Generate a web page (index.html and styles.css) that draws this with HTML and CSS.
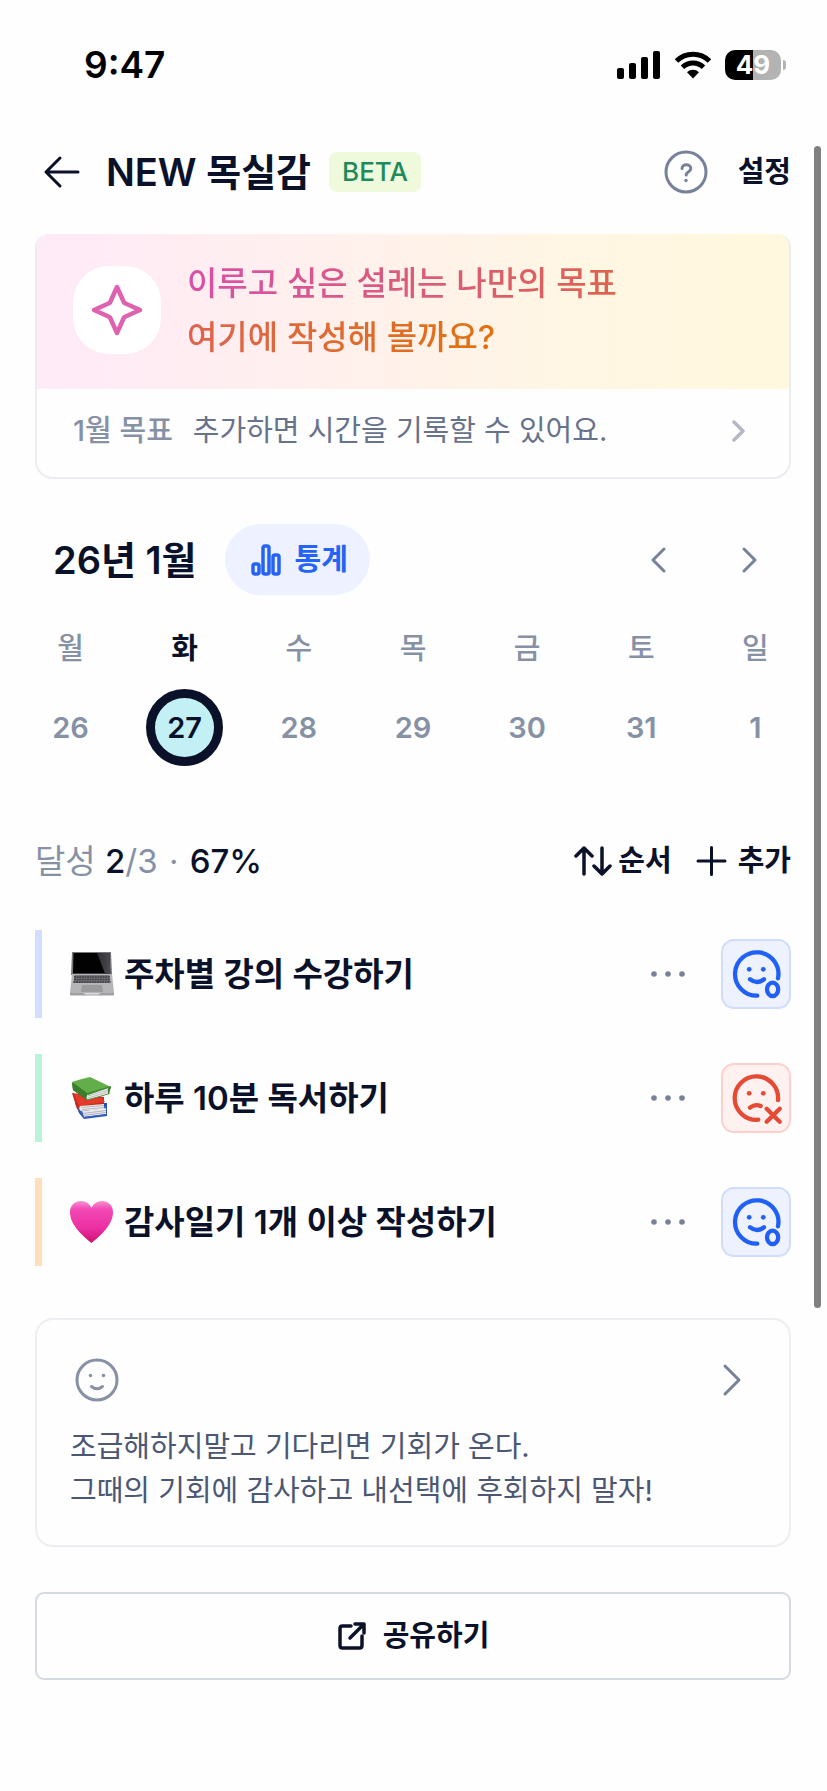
FILE: index.html
```html
<!DOCTYPE html>
<html lang="ko">
<head>
<meta charset="utf-8">
<meta name="viewport" content="width=device-width, initial-scale=1">
<title>NEW 목실감</title>
<link rel="stylesheet" href="styles.css">
</head>
<body>
<div class="screen">
  <div class="status-bar">
    <span class="status-time">9:47</span>
    <div class="status-icons">
      <svg width="44" height="30" viewBox="0 0 44 30" aria-hidden="true"><rect x="0" y="18" width="7" height="11" rx="2"/><rect x="12" y="13" width="7" height="16" rx="2"/><rect x="24" y="7" width="7" height="22" rx="2"/><rect x="36" y="1" width="7" height="28" rx="2"/></svg>
      <svg width="38" height="30" viewBox="0 0 38 30" aria-hidden="true"><g fill="none" stroke="#000" stroke-width="5"><path d="M2.500 11A23.500 23.500 0 0 1 35.500 11"/><path d="M8.500 17.200A15 15 0 0 1 29.500 17.200"/></g><path d="M13 22.200a8.600 8.600 0 0 1 12 0l-6 6.300z"/></svg>
      <div class="battery"><span class="battery-level">49</span></div>
    </div>
  </div>

  <header class="header">
    <button class="icon-button" type="button" aria-label="뒤로"><svg class="stroke" width="38" height="34" viewBox="0 0 38 34" stroke="#0a1128" stroke-width="3"><path d="M3 17h32M17 3L3 17l14 14"/></svg></button>
    <h1 class="title">NEW 목실감</h1>
    <span class="beta">BETA</span>
    <button class="icon-button help" type="button" aria-label="도움말"><svg class="stroke" width="44" height="44" viewBox="0 0 44 44" stroke="#77829a" stroke-width="3"><circle cx="22" cy="22" r="20"/><path d="M18 18.500c0-5 8.800-5 8.800 0 0 3.300-4.600 3.200-4.600 6.500"/><circle cx="22" cy="30.500" r="1.700" fill="#77829a" stroke="none"/></svg></button>
    <button class="text-button" type="button">설정</button>
  </header>

  <main class="content">
    <a class="goal-card" href="#goal">
      <div class="goal-banner">
        <span class="goal-tile"><svg class="stroke" width="52" height="52" viewBox="0 0 52 52" stroke="#df62b0" stroke-width="4.500"><path d="M26 3l7 15.500Q33.500 19 34 19.300L49 26l-15 6.700-1 .8L26 49l-7-15.500-1-.8L3 26l15-6.700 1-.8z"/></svg></span>
        <p class="goal-text"><span class="goal-gradient">이루고 싶은 설레는 나만의 목표<br>여기에 작성해 볼까요?</span></p>
      </div>
      <div class="goal-row">
        <span class="goal-label">1월 목표</span>
        <span class="goal-hint">추가하면 시간을 기록할 수 있어요.</span>
        <svg class="stroke" width="14" height="24" viewBox="0 0 14 24" stroke="#b3b8c6" stroke-width="3.500"><path d="M2 3l9 9-9 9"/></svg>
      </div>
    </a>

    <section>
      <div class="month-bar">
        <h2 class="month">26년 1월</h2>
        <button class="stats" type="button"><svg class="stroke" width="30" height="32" viewBox="0 0 30 32" stroke="#2563f6" stroke-width="3.500"><rect x="2" y="20" width="6" height="10" rx="2"/><rect x="12" y="2" width="6" height="28" rx="2"/><rect x="22" y="11" width="6" height="19" rx="2"/></svg>통계</button>
        <div class="month-nav">
          <button class="icon-button" type="button" aria-label="이전 주"><svg class="stroke" width="18" height="28" viewBox="0 0 18 28" stroke="#77829a" stroke-width="3"><path d="M15 3L4 14l11 11"/></svg></button>
          <button class="icon-button" type="button" aria-label="다음 주"><svg class="stroke" width="18" height="28" viewBox="0 0 18 28" stroke="#77829a" stroke-width="3"><path d="M3 3l11 11L3 25"/></svg></button>
        </div>
      </div>
      <div class="week">
        <button class="day" type="button"><span>월</span><span class="date">26</span></button>
        <button class="day selected" type="button"><span>화</span><span class="date">27</span></button>
        <button class="day" type="button"><span>수</span><span class="date">28</span></button>
        <button class="day" type="button"><span>목</span><span class="date">29</span></button>
        <button class="day" type="button"><span>금</span><span class="date">30</span></button>
        <button class="day" type="button"><span>토</span><span class="date">31</span></button>
        <button class="day" type="button"><span>일</span><span class="date">1</span></button>
      </div>
    </section>

    <section>
      <div class="summary">
        <p class="progress">달성 <b>2</b>/3 <i>·</i> <b>67%</b></p>
        <button class="text-button sort" type="button"><svg class="stroke" width="38" height="32" viewBox="0 0 38 32" stroke="#0a1128" stroke-width="3.500"><path d="M10 29V3M2 11l8-8 8 8M28 3v26M20 21l8 8 8-8"/></svg>순서</button>
        <button class="text-button add" type="button"><svg class="stroke" width="32" height="32" viewBox="0 0 32 32" stroke="#0a1128" stroke-width="3"><path d="M2 16h27M15.500 2.500v27"/></svg>추가</button>
      </div>

      <ul class="tasks">
        <li class="task blue">
          <svg width="44" height="44" viewBox="0 0 44 44" aria-hidden="true">
            <defs><linearGradient id="glare" x2="1"><stop offset="0" stop-color="#2c2c30"/><stop offset="1" stop-color="#4b4b50"/></linearGradient></defs>
            <path d="M2 0h39l1 23H1z" fill="#77777b"/><path d="M3.500 1h36l.8 20.500H3z" fill="#020203"/><path d="M27 1h12.500l.8 20.500H35z" fill="url(#glare)"/>
            <path d="M2 22h40l2 19H0z" fill="#b5b5b7"/><path d="M4.500 23h35l1 8H3.500z" fill="#77777b"/>
            <path d="M4 25h36M4 27.500h36M3.500 30h37" stroke="#3c3c40" stroke-width="1.500" stroke-dasharray="2 .6"/>
            <path d="M12 33h20l1 7H11z" fill="#9b9b9e"/><path d="M0 41h44v1.500l-1 1H1l-1-1z" fill="#a0a0a3"/><path d="M14 41h16l-1 1.500H15z" fill="#dcdcde"/>
          </svg>
          <span class="task-name">주차별 강의 수강하기</span>
          <button class="more" type="button" aria-label="더보기"><svg width="36" height="8" viewBox="0 0 36 8" fill="#77829a"><circle cx="4" cy="4" r="2.800"/><circle cx="18" cy="4" r="2.800"/><circle cx="32" cy="4" r="2.800"/></svg></button>
          <button class="mark done" type="button" aria-label="완료"><svg class="stroke" width="66" height="66" viewBox="2 2 66 66" stroke="#2060f6" stroke-width="4.300"><path d="M57 39.300A21.700 21.700 0 1 0 36.300 56.700M29 40.300q7 5.400 14 0"/><ellipse cx="51.600" cy="50.300" rx="5.600" ry="6.700"/><g fill="#2060f6" stroke="none"><circle cx="28.200" cy="30.300" r="2.400"/><circle cx="42.300" cy="30.300" r="2.400"/></g></svg></button>
        </li>
        <li class="task green">
          <svg width="44" height="44" viewBox="0 0 44 44" aria-hidden="true">
            <path d="M5 27l4 10 5 6 23-3V27z" fill="#2852a8"/><path d="M12 35l24-3v6l-22 3z" fill="#e9e9ee"/><path d="M13 37.500l23-3M13.500 39.500l22-3" stroke="#9a9dab" stroke-width=".7"/><path d="M8 32l28-2v2l-24 3 1 6 24-3v1l-23 3-4-6z" fill="#3567c4"/>
            <path d="M2 17l5 16 27-1V21z" fill="#c52b1e"/><path d="M4 18l28 4 3 4-26 4z" fill="#e33a2b"/><path d="M10 30l24-2v5l-23 2q-3-2-1-5z" fill="#eceaea"/><path d="M11 31.500l23-2M12 33.500l22-2" stroke="#a6a3a5" stroke-width=".7"/>
            <path d="M2 7l1 7 14 10 22-6 2-7z" fill="#3c7d2c"/><path d="M2 6Q10 3 20 1l21 10-23 7z" fill="#63ae4b"/><path d="M18 18l20-6v6l-20 6q-3-2 0-6z" fill="#ededed"/><path d="M18 20l20-6M18 22l20-6" stroke="#a9a9a9" stroke-width=".7"/><path d="M2 6l15 11q-3 3 0 7L3 14z" fill="#397f2c"/><path d="M17 17l24-7v1l-23 8zM17 23.500l22-6h2l-24 7z" fill="#3d872f"/>
          </svg>
          <span class="task-name">하루 10분 독서하기</span>
          <button class="more" type="button" aria-label="더보기"><svg width="36" height="8" viewBox="0 0 36 8" fill="#77829a"><circle cx="4" cy="4" r="2.800"/><circle cx="18" cy="4" r="2.800"/><circle cx="32" cy="4" r="2.800"/></svg></button>
          <button class="mark missed" type="button" aria-label="미완료"><svg class="stroke" width="66" height="66" viewBox="2 2 66 66" stroke="#e54a35" stroke-width="4.300"><path d="M57 37A21.700 21.700 0 1 0 37.300 56.700M29 44.600q5-4 10.700-1.600M45.700 45.800l13 13M58.700 45.800l-13 13"/><g fill="#e54a35" stroke="none"><circle cx="28.200" cy="30.300" r="2.400"/><circle cx="42.300" cy="30.300" r="2.400"/></g></svg></button>
        </li>
        <li class="task orange">
          <svg width="44" height="44" viewBox="0 0 44 44" aria-hidden="true">
            <defs><linearGradient id="pink" x2="0" y2="1"><stop offset="0" stop-color="#f792d0"/><stop offset=".2" stop-color="#f148b4"/><stop offset=".65" stop-color="#ec2fa2"/><stop offset="1" stop-color="#c91173"/></linearGradient></defs>
            <path d="M21.500 43C14 37 0 25 0 12.500 0 5 5 1 11 1c5 0 9 3 10.500 7C23 4 27 1 32 1c6 0 11 4 11 11.500C43 25 29 37 21.500 43z" fill="url(#pink)"/>
          </svg>
          <span class="task-name">감사일기 1개 이상 작성하기</span>
          <button class="more" type="button" aria-label="더보기"><svg width="36" height="8" viewBox="0 0 36 8" fill="#77829a"><circle cx="4" cy="4" r="2.800"/><circle cx="18" cy="4" r="2.800"/><circle cx="32" cy="4" r="2.800"/></svg></button>
          <button class="mark done" type="button" aria-label="완료"><svg class="stroke" width="66" height="66" viewBox="2 2 66 66" stroke="#2060f6" stroke-width="4.300"><path d="M57 39.300A21.700 21.700 0 1 0 36.300 56.700M29 40.300q7 5.400 14 0"/><ellipse cx="51.600" cy="50.300" rx="5.600" ry="6.700"/><g fill="#2060f6" stroke="none"><circle cx="28.200" cy="30.300" r="2.400"/><circle cx="42.300" cy="30.300" r="2.400"/></g></svg></button>
        </li>
      </ul>
    </section>

    <a class="note" href="#note">
      <div class="note-head">
        <svg class="stroke" width="44" height="44" viewBox="0 0 44 44" stroke="#8791a6" stroke-width="3"><circle cx="22" cy="22" r="20"/><path d="M16.500 28.500q5.500 4.500 11 0"/><g fill="#8791a6" stroke="none"><circle cx="15.500" cy="17.500" r="1.800"/><circle cx="28.500" cy="17.500" r="1.800"/></g></svg>
        <svg class="stroke" width="20" height="34" viewBox="0 0 20 34" stroke="#77829a" stroke-width="3"><path d="M3 3l14 14L3 31"/></svg>
      </div>
      <p class="note-text">조급해하지말고 기다리면 기회가 온다.<br>그때의 기회에 감사하고 내선택에 후회하지 말자!</p>
    </a>

    <button class="share" type="button"><svg class="stroke" width="30" height="30" viewBox="0 0 30 30" stroke="#0a1128" stroke-width="3.500"><path d="M14 5H5.500Q3 5 3 7.500v17Q3 27 5.500 27h17q2.500 0 2.500-2.500V15M13 17L26 4M18 3h9v9"/></svg>공유하기</button>
  </main>
  <div class="scroll-thumb"></div>
</div>
</body>
</html>
```

FILE: styles.css
```css
* {
  box-sizing: border-box;
}

body {
  margin: 0;
  background: #fefefe;
  color: #0a1128;
  font-family: Inter, "Noto Sans CJK KR", sans-serif;
  font-size: 29px;
  line-height: 44px;
}

h1,
h2,
p,
ul {
  margin: 0;
  padding: 0;
}

button {
  padding: 0;
  border: 0;
  background: none;
  color: inherit;
  font: inherit;
}

a {
  color: inherit;
  text-decoration: none;
}

svg {
  display: block;
  flex: none;
}

.stroke {
  fill: none;
  stroke-linecap: round;
  stroke-linejoin: round;
}

.screen {
  position: relative;
}

/* Status bar */
.status-bar {
  display: flex;
  align-items: center;
  justify-content: space-between;
  padding: 45px 41px 27px 84px;
  color: #000;
}

.status-time {
  font-size: 37px;
  font-weight: 600;
  line-height: 40px;
}

.status-icons {
  display: flex;
  align-items: center;
  gap: 13px;
}

.battery {
  position: relative;
  width: 56px;
  height: 30px;
  margin-right: 5px;
  border-radius: 10px;
  background: linear-gradient(90deg, #000 50%, #b3b3b3 50%);
  color: #fff;
  font-size: 26px;
  font-weight: 700;
  line-height: 30px;
  text-align: center;
}

.battery::after {
  content: "";
  position: absolute;
  top: 10px;
  right: -5px;
  width: 3px;
  height: 10px;
  border-radius: 0 3px 3px 0;
  background: #b3b3b3;
}

/* Header */
.header {
  display: flex;
  align-items: center;
  padding: 36px 36px 38px 43px;
  line-height: 48px;
}

.title {
  margin-left: 25px;
  font-size: 38px;
  font-weight: 600;
}

.beta {
  margin-left: 18px;
  padding: 0 13px;
  border-radius: 8px;
  background: #eefadb;
  color: #1f8a5b;
  font-size: 26px;
  font-weight: 500;
  line-height: 40px;
}

.help {
  margin: 0 30px 0 auto;
}

.text-button {
  display: flex;
  align-items: center;
  font-weight: 600;
}

/* Content */
.content {
  display: flex;
  flex-direction: column;
  padding: 0 36px 110px 35px;
}

.goal-card {
  overflow: hidden;
  border: 2px solid #ebecf1;
  border-top: 0;
  border-radius: 14px 14px 18px 18px;
}

.goal-banner {
  display: flex;
  align-items: center;
  gap: 26px;
  padding: 22px 36px 25px;
  background: linear-gradient(90deg, #ffeaf8, #fff1eb 45%, #fff6e4 70%, #fff8dd);
}

.goal-tile {
  display: grid;
  place-items: center;
  width: 88px;
  height: 88px;
  border-radius: 36px;
  background: #fff;
}

.goal-text {
  font-size: 33px;
  font-weight: 500;
  line-height: 54px;
}

/* The gradient runs on from the first line into the second */
.goal-gradient {
  background: linear-gradient(90deg, #d850a8, #e2710f);
  background-clip: text;
  -webkit-background-clip: text;
  color: transparent;
}

.goal-row {
  display: flex;
  align-items: center;
  padding: 20px 43px 24px 36px;
}

.goal-label {
  margin-right: 20px;
  color: #8791a6;
  font-weight: 500;
}

.goal-hint {
  margin-right: auto;
  color: #67728c;
}

.month-bar {
  display: flex;
  align-items: center;
  margin-top: 45px;
  padding: 0 32px 0 18px;
}

.month {
  font-size: 38px;
  font-weight: 600;
}

.stats {
  display: flex;
  align-items: center;
  gap: 14px;
  height: 71px;
  margin-left: 28px;
  padding: 0 22px 0 26px;
  border-radius: 36px;
  background: #eef1ff;
  color: #2563f6;
  font-weight: 600;
}

.month-nav {
  display: flex;
  gap: 74px;
  margin-left: auto;
}

.week {
  display: flex;
  justify-content: space-between;
  margin: 34px -3px 0;
}

.day {
  display: flex;
  flex-direction: column;
  gap: 20px;
  color: #8791a6;
  font-weight: 500;
  line-height: 40px;
}

.date {
  display: grid;
  place-items: center;
  width: 77px;
  height: 77px;
  border-radius: 50%;
  font-weight: 600;
}

.selected {
  color: #0a1128;
  font-weight: 600;
}

.selected .date {
  border: 9px solid #0a1128;
  background: #c3f0f4;
}

.summary {
  display: flex;
  align-items: center;
  margin-top: 71px;
  line-height: 48px;
}

.progress {
  margin-right: auto;
  color: #8791a6;
  font-size: 33px;
}

.progress b {
  color: #0a1128;
  font-weight: 500;
}

.progress i {
  margin: 0 2px;
  font-style: normal;
}

.sort {
  gap: 6px;
}

.add {
  gap: 10px;
  margin-left: 24px;
}

.tasks {
  display: flex;
  flex-direction: column;
  gap: 36px;
  margin-top: 45px;
  list-style: none;
}

.task {
  display: flex;
  align-items: center;
  height: 88px;
  padding-left: 28px;
  border-left: 7px solid;
}

.blue {
  border-color: #d2ddff;
}

.green {
  border-color: #b9f3dc;
}

.orange {
  border-color: #ffe0bd;
}

.task-name {
  margin: 0 auto 0 10px;
  font-size: 33px;
  font-weight: 600;
}

.more {
  margin-right: 35px;
}

.mark {
  width: 70px;
  height: 70px;
  border: 2px solid;
  border-radius: 13px;
}

.done {
  border-color: #d0dcfc;
  background: #eef2ff;
}

.missed {
  border-color: #ffd0cb;
  background: #fff1ef;
}

.note {
  margin-top: 52px;
  padding: 38px 45px 32px 33px;
  border: 2px solid #edeef2;
  border-radius: 18px;
  color: #4b5773;
}

.note-head {
  display: flex;
  align-items: center;
  justify-content: space-between;
  margin: 0 2px 23px 5px;
}

.share {
  display: flex;
  align-items: center;
  justify-content: center;
  gap: 16px;
  height: 88px;
  margin-top: 45px;
  border: 2px solid #d5dae0;
  border-radius: 9px;
  font-weight: 600;
}

.scroll-thumb {
  position: absolute;
  top: 146px;
  right: 6px;
  width: 7px;
  height: 1162px;
  border-radius: 4px;
  background: #808080;
}
```
